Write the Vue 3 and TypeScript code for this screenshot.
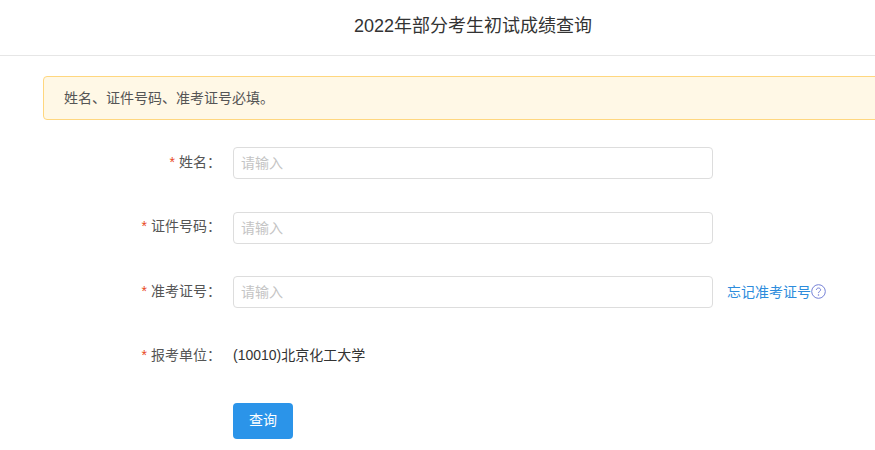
<script setup lang="ts">
interface Field {
  label: string
  key: string
}

const fields: Field[] = [
  { label: '姓名', key: 'name' },
  { label: '证件号码', key: 'idNumber' },
  { label: '准考证号', key: 'ticket' },
]
</script>

<template>
  <div class="page">
    <header class="title"><span class="title-text">2022年部分考生初试成绩查询</span></header>
    <main class="content">
      <div class="notice">姓名、证件号码、准考证号必填。</div>
      <form class="form" @submit.prevent>
        <div v-for="field in fields" :key="field.key" class="row">
          <label class="label"><span class="star">*</span>{{ field.label }}：</label>
          <input class="input" type="text" placeholder="请输入" />
          <a v-if="field.key === 'ticket'" class="forgot" href="#">
            忘记准考证号<svg class="help" width="15" height="15" viewBox="0 0 15 15" fill="none">
              <circle cx="7.5" cy="7.5" r="6.8" stroke="#7480d6" stroke-width="1" />
              <path d="M5.4 6C5.4 4.8 6.3 4 7.5 4C8.7 4 9.6 4.8 9.6 5.9C9.6 7.2 7.5 7.4 7.5 9.1" stroke="#7480d6" stroke-width="1" />
              <circle cx="7.5" cy="11" r="0.75" fill="#7480d6" />
            </svg>
          </a>
        </div>
        <div class="row">
          <label class="label"><span class="star">*</span>报考单位：</label>
          <span class="value">(10010)北京化工大学</span>
        </div>
        <div class="actions">
          <button class="submit" type="submit">查询</button>
        </div>
      </form>
    </main>
  </div>
</template>

<style>
html,
body {
  background: #fff;
  overflow: hidden;
}
</style>

<style scoped>
.page {
  width: 875px;
  height: 450px;
  overflow: hidden;
  font-family: "Liberation Sans", "Noto Sans CJK SC", sans-serif;
  font-size: 14px;
  color: #444;
}

.title {
  height: 55px;
  line-height: 52px;
  border-bottom: 1px solid #e6e6e6;
  font-size: 18px;
  text-align: center;
  color: #333;
}

.title-text {
  margin-left: 71px;
}

.content {
  padding: 20px 0 0 43px;
}

.notice {
  width: 840px;
  height: 44px;
  box-sizing: border-box;
  padding-left: 20px;
  line-height: 42px;
  background: #fff8e6;
  border: 1px solid #ffd77f;
  border-radius: 4px;
  color: #555;
}

.form {
  margin-top: 27px;
}

.row {
  display: flex;
  align-items: center;
  height: 32px;
  margin-bottom: 32.5px;
}

.label {
  width: 178px;
  text-align: right;
  line-height: 28px;
  margin-bottom: 3px;
  color: #555;
}

.star {
  margin-right: 4px;
  color: #e8481c;
}

.input {
  width: 480px;
  height: 32px;
  box-sizing: border-box;
  margin-left: 12px;
  padding: 0 7px;
  border: 1px solid #ddd;
  border-radius: 4px;
  outline: none;
  font: inherit;
}

.input::placeholder {
  color: #c4c4c4;
}

.forgot {
  display: flex;
  align-items: center;
  margin-left: 14px;
  margin-bottom: 3px;
  color: #2d8cdc;
  text-decoration: none;
}

.help {
  margin-top: 1px;
}

.value {
  margin-left: 12px;
  margin-bottom: 5px;
  color: #333;
}

.actions {
  margin: -2px 0 0 190px;
}

.submit {
  width: 60px;
  height: 36px;
  border: none;
  border-radius: 4px;
  padding: 0 0 4px;
  background: #2b94e9;
  color: #fff;
  font: inherit;
}
</style>
